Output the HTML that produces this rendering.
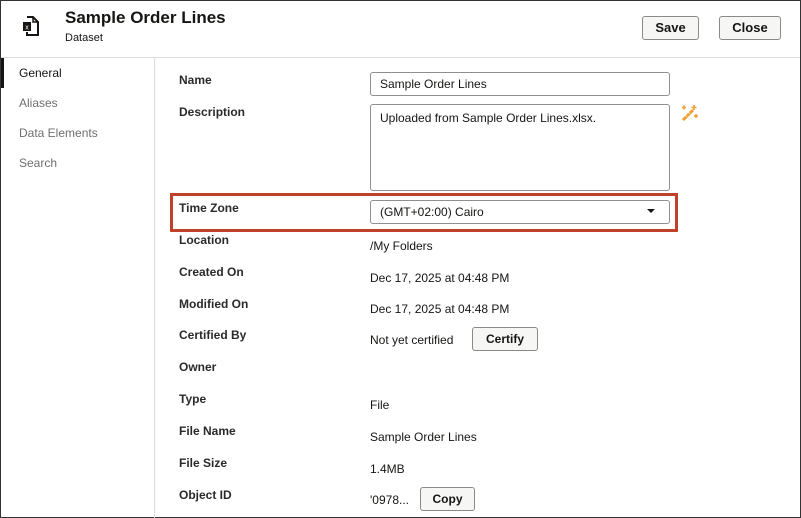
<html><head><style>
body{margin:0;width:801px;height:518px;overflow:hidden;font-family:"Liberation Sans",sans-serif;color:#161513;background:#fff;position:relative}
.frame{position:absolute;left:0;top:0;width:799px;height:516px;border:1px solid #333}
.a{position:absolute;white-space:nowrap}
.lbl{position:absolute;left:179px;font-size:12px;font-weight:bold;color:#2a2a2a}
.val{position:absolute;left:370px;font-size:12px}
.btn{position:absolute;border:1px solid #8a8a88;border-radius:3px;background:#f6f6f5;font-size:13px;font-weight:bold;text-align:center;box-sizing:border-box}
.inp{position:absolute;border:1px solid #8f8f8f;border-radius:3px;box-sizing:border-box;font-size:12px;padding-left:9px}
.nav{position:absolute;left:19px;font-size:12px;color:#6f6f6f}
</style></head><body>
<div class="frame"></div>
<svg class="a" style="left:22px;top:16px" width="18" height="20" viewBox="0 0 18 20"><path d="M5 1h6l5 5v13H5v-3" fill="none" stroke="#161513" stroke-width="2"/><path d="M11 1v5h5" fill="none" stroke="#161513" stroke-width="1.5"/><rect x="1" y="6" width="8" height="9" fill="#161513"/><text x="5" y="13.5" font-size="7" fill="#fff" text-anchor="middle" font-family="Liberation Sans">x</text></svg>
<div class="a" style="left:65px;top:8px;font-size:17px;font-weight:bold">Sample Order Lines</div>
<div class="a" style="left:65px;top:32px;font-size:11px">Dataset</div>
<div class="btn" style="left:642px;top:16px;width:57px;height:24px;line-height:22px">Save</div>
<div class="btn" style="left:719px;top:16px;width:62px;height:24px;line-height:22px">Close</div>
<div class="a" style="left:1px;top:57px;width:799px;height:1px;background:#dcdcdc"></div>
<div class="a" style="left:154px;top:58px;width:1px;height:460px;background:#dcdcdc"></div>
<div class="a" style="left:1px;top:58px;width:3px;height:30px;background:#161513"></div>
<div class="nav" style="top:66px;color:#161513">General</div>
<div class="nav" style="top:96px">Aliases</div>
<div class="nav" style="top:126px">Data Elements</div>
<div class="nav" style="top:156px">Search</div>
<div class="lbl" style="top:73px">Name</div>
<div class="lbl" style="top:105px">Description</div>
<div class="lbl" style="top:201px">Time Zone</div>
<div class="lbl" style="top:233px">Location</div>
<div class="lbl" style="top:265px">Created On</div>
<div class="lbl" style="top:297px">Modified On</div>
<div class="lbl" style="top:328px">Certified By</div>
<div class="lbl" style="top:360px">Owner</div>
<div class="lbl" style="top:392px">Type</div>
<div class="lbl" style="top:424px">File Name</div>
<div class="lbl" style="top:456px">File Size</div>
<div class="lbl" style="top:488px">Object ID</div>
<div class="inp" style="left:370px;top:72px;width:300px;height:24px;line-height:22px">Sample Order Lines</div>
<div class="inp" style="left:370px;top:104px;width:300px;height:87px;padding-top:6px">Uploaded from Sample Order Lines.xlsx.</div>
<svg class="a" style="left:680px;top:104px" width="19" height="19" viewBox="0 0 19 19"><path d="M3 16L13 6" stroke="#f0a030" stroke-width="3"/><path d="M6.5 12.5l-1 -1M9.5 9.5l-1 -1" stroke="#fff" stroke-width="1"/><path d="M14 1v5M11.5 3.5h5M4 1.5v4M2 3.5h4M16 10v4M14 12h4" stroke="#f0a030" stroke-width="1.6"/></svg>
<div class="a" style="left:170px;top:193px;width:502px;height:33px;border:3px solid #c0412b"></div>
<div class="inp" style="left:370px;top:200px;width:300px;height:24px;line-height:22px">(GMT+02:00) Cairo</div>
<svg class="a" style="left:647px;top:209px" width="8" height="5"><path d="M0 0h8L4 4z" fill="#161513"/></svg>
<div class="val" style="top:239px">/My Folders</div>
<div class="val" style="top:271px">Dec 17, 2025 at 04:48 PM</div>
<div class="val" style="top:302px">Dec 17, 2025 at 04:48 PM</div>
<div class="val" style="top:333px">Not yet certified</div>
<div class="btn" style="left:472px;top:327px;width:66px;height:24px;line-height:22px;font-size:12px">Certify</div>
<div class="val" style="top:398px">File</div>
<div class="val" style="top:430px">Sample Order Lines</div>
<div class="val" style="top:462px">1.4MB</div>
<div class="val" style="top:493px">'0978...</div>
<div class="btn" style="left:420px;top:487px;width:55px;height:24px;line-height:22px;font-size:12px">Copy</div>
</body></html>
